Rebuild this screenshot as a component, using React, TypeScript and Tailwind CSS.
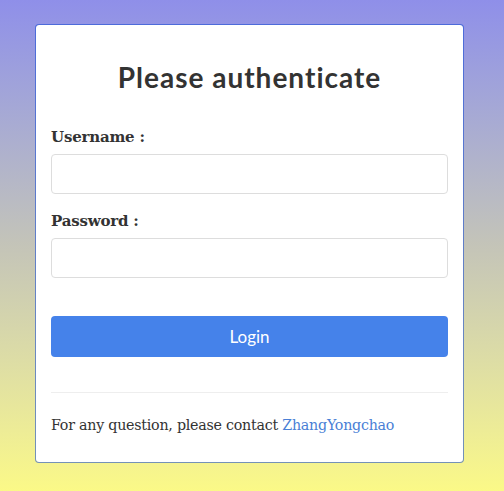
export default function App() {
  return (
    <div className="min-h-[491px] w-full bg-gradient-to-b from-[#8f8fe9] via-[#c4c4b8] to-[#fbf987] pt-6 pb-7">
      <div className="ml-[35px] w-[429px] rounded-[4px] border border-[rgba(30,80,210,0.6)] bg-white bg-clip-padding px-[15px] pt-[30px] pb-[25px]">
        <h1 className="text-center text-[28px] font-bold tracking-[1px] text-[#333] font-['Lato','Open_Sans',sans-serif] leading-[44px] mb-[28px]">
          Please authenticate
        </h1>

        <form className="flex flex-col" onSubmit={(e) => e.preventDefault()}>
          <label className="text-[15px] font-bold text-[#333] font-['DejaVu_Serif','Liberation_Serif',serif] leading-5 mb-[7px] tracking-[-0.2px]">
            Username :
          </label>
          <input
            type="text"
            className="h-[40px] w-full rounded-[4px] border border-[#ddd] px-3 outline-none mb-[17px]"
          />
          <label className="text-[15px] font-bold text-[#333] font-['DejaVu_Serif','Liberation_Serif',serif] leading-5 mb-[7px] tracking-[-0.2px]">
            Password :
          </label>
          <input
            type="password"
            className="h-[40px] w-full rounded-[4px] border border-[#ddd] px-3 outline-none"
          />

          <button
            type="submit"
            className="mt-[38px] h-[41px] w-full rounded-[4px] bg-[#4582ea] text-[17px] text-white font-['Lato','Open_Sans',sans-serif]"
          >
            Login
          </button>
        </form>

        <hr className="mt-[35px] border-t border-[#eee]" />

        <p className="mt-[20px] text-[14.25px] text-[#333] font-['DejaVu_Serif','Liberation_Serif',serif] leading-6 tracking-[-0.25px]">
          For any question, please contact{" "}
          <a href="#" className="text-[#4a7fd6]">
            ZhangYongchao
          </a>
        </p>
      </div>
    </div>
  );
}
